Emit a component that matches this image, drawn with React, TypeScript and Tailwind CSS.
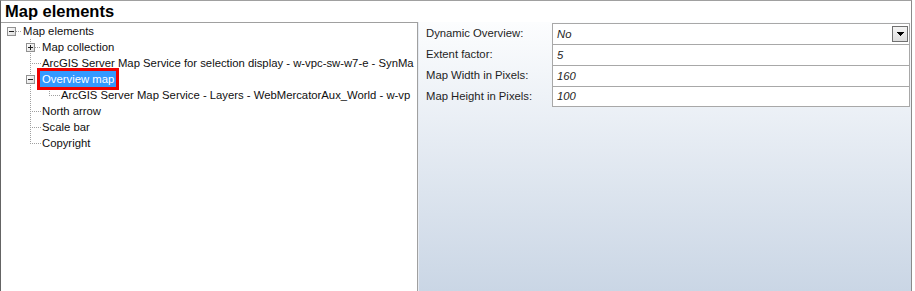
import React from "react";

type Row = { level: number; label: string; exp: "minus" | "plus" | null; selected?: boolean };

const rows: Row[] = [
  { level: 0, label: "Map elements", exp: "minus" },
  { level: 1, label: "Map collection", exp: "plus" },
  { level: 1, label: "ArcGIS Server Map Service for selection display - w-vpc-sw-w7-e - SynMa", exp: null },
  { level: 1, label: "Overview map", exp: "minus", selected: true },
  { level: 2, label: "ArcGIS Server Map Service - Layers - WebMercatorAux_World - w-vp", exp: null },
  { level: 1, label: "North arrow", exp: null },
  { level: 1, label: "Scale bar", exp: null },
  { level: 1, label: "Copyright", exp: null },
];

const padByLevel = ["pl-[6px]", "pl-[25px]", "pl-[44px]"];

function Expander({ kind }: { kind: "minus" | "plus" | null }) {
  if (!kind) return <span className="w-[9px] h-[9px] shrink-0" />;
  return (
    <span className="relative w-[9px] h-[9px] shrink-0 border border-[#919191] bg-gradient-to-br from-white to-[#dcdcdc]">
      <span className="absolute left-[1px] top-[3px] w-[5px] h-[1px] bg-[#202020]" />
      {kind === "plus" && <span className="absolute left-[3px] top-[1px] w-[1px] h-[5px] bg-[#202020]" />}
    </span>
  );
}

function Connectors() {
  const segs: [number, number, number, number][] = [
    [16, 31, 21, 31],
    [30, 39, 30, 143],
    [35, 47, 40, 47],
    [30, 63, 40, 63],
    [49, 87, 49, 95],
    [49, 95, 59, 95],
    [30, 111, 40, 111],
    [30, 127, 40, 127],
    [30, 143, 40, 143],
  ];
  const dots: React.ReactNode[] = [];
  segs.forEach(([x1, y1, x2, y2], i) => {
    if (y1 === y2) {
      for (let x = x1; x <= x2; x += 2) dots.push(<rect key={`${i}-${x}`} x={x - 1} y={y1 - 23} width={1} height={1} fill="#a0a0a0" />);
    } else {
      for (let y = y1; y <= y2; y += 2) dots.push(<rect key={`${i}-${y}`} x={x1 - 1} y={y - 23} width={1} height={1} fill="#a0a0a0" />);
    }
  });
  return (
    <svg className="absolute left-0 top-0 pointer-events-none" width={416} height={200} shapeRendering="crispEdges">
      {dots}
    </svg>
  );
}

function Tree() {
  return (
    <div className="relative w-[417px] h-full border-t border-r border-[#a0a0a0] bg-white overflow-hidden">
      <Connectors />
      <div className="relative flex flex-col">
        {rows.map((r, i) => (
          <div key={i} className={`h-[16px] flex items-center gap-[5px] whitespace-nowrap ${padByLevel[r.level]}`}>
            <Expander kind={r.exp} />
            {r.selected ? (
              <span className="h-[16px] leading-[16px] px-[2px] bg-[#3399ff] text-white outline outline-[3px] outline-[#ee0000]">
                {r.label}
              </span>
            ) : (
              <span className="h-[16px] leading-[16px] px-[2px] text-[#101010]">{r.label}</span>
            )}
          </div>
        ))}
      </div>
    </div>
  );
}

const props = [
  { label: "Dynamic Overview:", value: "No", dropdown: true },
  { label: "Extent factor:", value: "5" },
  { label: "Map Width in Pixels:", value: "160" },
  { label: "Map Height in Pixels:", value: "100" },
];

function Properties() {
  return (
    <div className="flex-1 h-full border-l border-[#e6ebf2] bg-gradient-to-b from-[#fcfdfe] to-[#cad6e5] pl-[7px] pt-[1px]">
      <div className="flex flex-col">
        {props.map((p, i) => (
          <div key={i} className="flex h-[21px]">
            <div className="w-[126px] leading-[21px] text-[#1e1e1e] whitespace-nowrap">{p.label}</div>
            <div
              className={`w-[358px] flex items-center justify-between bg-white border-x border-t border-[#a8a8a8] pl-[4px] pr-[1px] ${
                i === props.length - 1 ? "border-b" : ""
              }`}
            >
              <span className="italic text-[#1e1e1e]">{p.value}</span>
              {p.dropdown && (
                <span className="w-[16px] h-[16px] border border-[#707070] bg-gradient-to-b from-[#f4f4f4] to-[#dedede] flex items-center justify-center">
                  <svg width="7" height="4" viewBox="0 0 7 4" shapeRendering="crispEdges">
                    <path d="M0 0H7L3.5 4Z" fill="#000" />
                  </svg>
                </span>
              )}
            </div>
          </div>
        ))}
      </div>
    </div>
  );
}

export default function App() {
  return (
    <div className="w-[915px] h-[291px] bg-white overflow-hidden" style={{ fontFamily: '"Liberation Sans", Arial, sans-serif' }}>
      <div className="w-[912px] h-[291px] border-l border-l-[#646464] border-t border-t-[#a0a0a0] border-r border-r-[#8a8a8a] flex flex-col text-[11.3px]">
        <div className="h-[21px] shrink-0 pl-[4px] text-[16.5px] font-bold leading-[21px] text-black">Map elements</div>
        <div className="flex flex-1 min-h-0">
          <Tree />
          <Properties />
        </div>
      </div>
    </div>
  );
}
